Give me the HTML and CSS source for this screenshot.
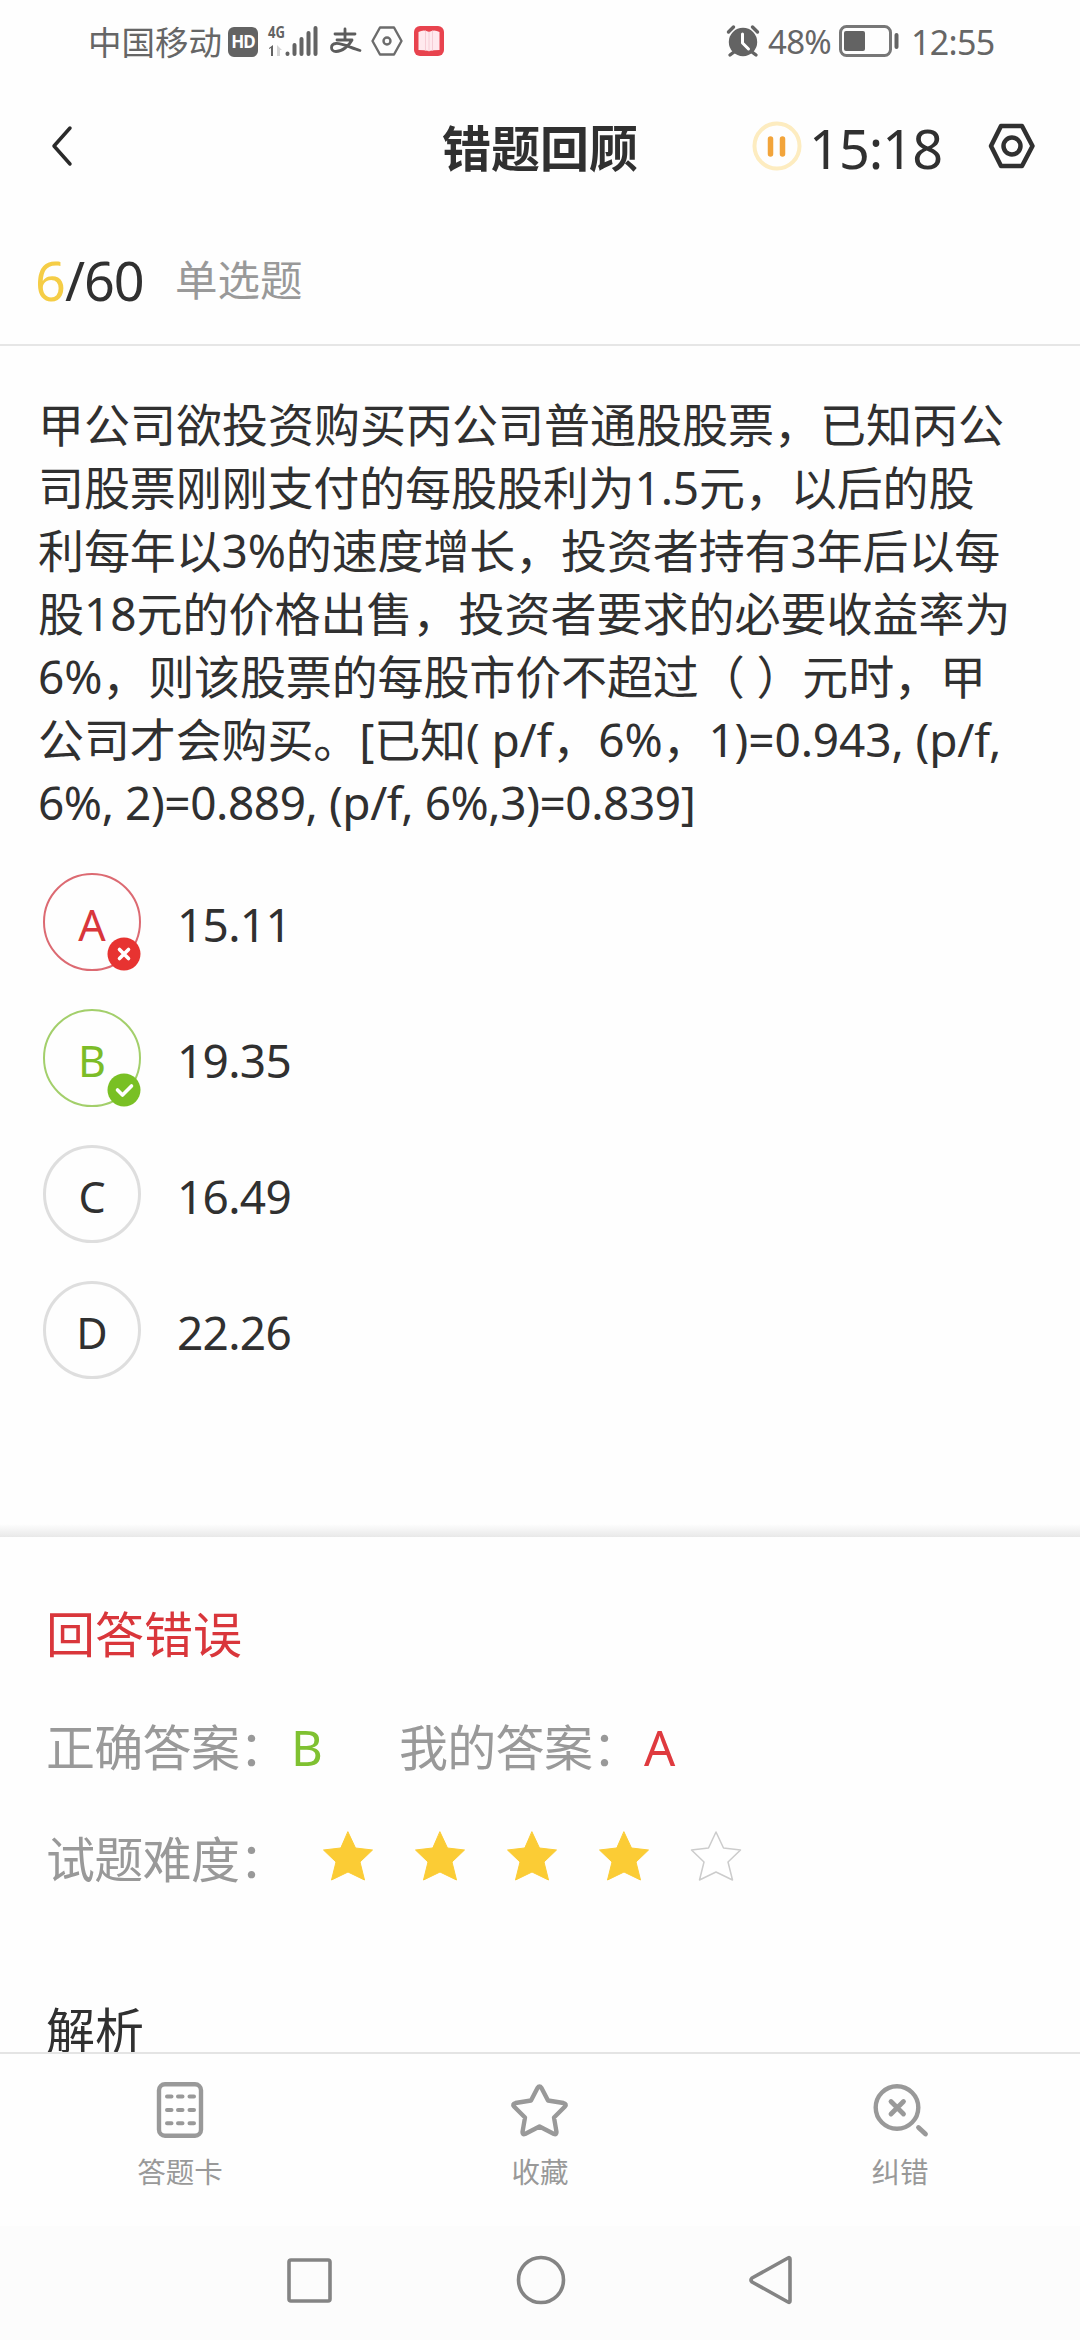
FILE: index.html
```html
<!DOCTYPE html>
<html lang="zh-CN">
<head>
<meta charset="utf-8">
<title>错题回顾</title>
<link rel="stylesheet" href="styles.css">
</head>
<body>
<div class="status">
  <span class="carrier">中国移动</span>
  <span class="hd">HD</span>
  <svg class="signal" width="52" height="34" viewBox="0 0 52 34">
    <text class="net" x="0" y="14" textLength="17" lengthAdjust="spacingAndGlyphs">4G</text>
    <path class="solid" d="M1 24l4-3v11H3v-8l-2 1z"/>
    <path class="faint" d="M9 21l5 5h-2v6H9z"/>
    <path class="bars" d="M19.500 29.500v.5M26.500 21v9M33.500 15v15M40.500 9v21M47.500 4v26"/>
  </svg>
  <svg class="pay" width="32" height="26" viewBox="0 0 32 26">
    <path class="pay-stroke" d="M5 5h20M15 0v11M7 11h15C19 17 12 22.500 6 22.500c-6 0-6-7.500 0-8 6-.5 15 4.500 24 7"/>
  </svg>
  <svg class="eye" width="32" height="30" viewBox="0 0 32 30">
    <path class="thin" d="M9 1.500h14L30.500 15 23 28.500H9L1.500 15z"/><circle class="thin" cx="16" cy="15" r="3.500"/>
  </svg>
  <svg class="book" width="30" height="30" viewBox="0 0 30 30">
    <rect class="book-bg" width="30" height="30" rx="6"/><path class="page" d="M4.500 6Q10 3 15 6q5-3 10.500 0v18Q20 24 15 25q-5-1-10.500-1z"/><path class="fold" d="M15 6v19M11.500 5v19M18.500 5v19"/>
  </svg>
  <svg class="alarm" width="32" height="32" viewBox="0 0 32 32">
    <circle class="solid" cx="16" cy="17" r="14.200"/>
    <path class="leg" d="M1.500 7l5-5M30.500 7l-5-5M7 27l-4 3M25 27l4 3"/>
    <path class="hand" d="M15.500 9v9l6 6"/>
  </svg>
  <span class="pct">48%</span>
  <svg class="battery" width="60" height="32" viewBox="0 0 60 32">
    <rect class="shell" x="1.500" y="1.500" width="50" height="29" rx="6"/><rect class="solid" x="5" y="6" width="21" height="20" rx="2"/><rect class="solid" x="55.500" y="8" width="4" height="16" rx="2"/>
  </svg>
  <span class="clock">12:55</span>
</div>

<header class="header">
  <svg class="back" width="22" height="40" viewBox="0 0 22 40"><path d="M19 2L3 20l16 18"/></svg>
  <h1 class="title">错题回顾</h1>
  <svg class="pause" width="50" height="50" viewBox="0 0 50 50"><circle cx="25" cy="25" r="22.500"/><path d="M18.500 18v15M30.500 18v15"/></svg>
  <span class="timer">15:18</span>
  <svg class="gear" width="48" height="46" viewBox="0 0 48 46"><path d="M13 3h21l10.500 20L34 43H13L3 23z"/><circle cx="24" cy="23" r="8.500"/></svg>
</header>

<div class="progress">
  <span class="count"><b class="current">6</b>/60</span>
  <span class="kind">单选题</span>
</div>

<main class="question">
  <p class="stem">
    <span class="line">甲公司欲投资购买丙公司普通股股票，已知丙公</span>
    <span class="line snug">司股票刚刚支付的每股股利为1.5元，以后的股</span>
    <span class="line snug">利每年以3%的速度增长，投资者持有3年后以每</span>
    <span class="line">股18元的价格出售，投资者要求的必要收益率为</span>
    <span class="line snug">6%，则该股票的每股市价不超过（ ）元时，甲</span>
    <span class="line snug">公司才会购买。[已知( p/f，6%，1)=0.943, (p/f,</span>
    <span class="line tight">6%, 2)=0.889, (p/f, 6%,3)=0.839]</span>
  </p>
  <ul class="options">
    <li class="option wrong"><span class="mark">A<svg class="badge" width="34" height="34" viewBox="0 0 34 34"><circle cx="17" cy="17" r="16.500"/><path d="M12.500 12.500l9 9M21.500 12.500l-9 9"/></svg></span><span class="value">15.11</span></li>
    <li class="option right"><span class="mark">B<svg class="badge" width="34" height="34" viewBox="0 0 34 34"><circle cx="17" cy="17" r="16.500"/><path d="M10.500 17l5 5 9-9"/></svg></span><span class="value">19.35</span></li>
    <li class="option"><span class="mark">C</span><span class="value">16.49</span></li>
    <li class="option"><span class="mark">D</span><span class="value">22.26</span></li>
  </ul>
</main>

<section class="result">
  <div class="verdict">回答错误</div>
  <div class="row">
    <span class="label">正确答案：</span><span class="ok">B</span>
    <span class="label">我的答案：</span><span class="bad">A</span>
  </div>
  <div class="row">
    <span class="label">试题难度：</span>
    <span class="stars">
      <svg class="star" viewBox="0 0 52 50"><path d="M26 1l7.500 16L50.500 19 38 31l4.500 18L26 41 9.500 49 14 31 1.500 19l17-2z"/></svg>
      <svg class="star" viewBox="0 0 52 50"><path d="M26 1l7.500 16L50.500 19 38 31l4.500 18L26 41 9.500 49 14 31 1.500 19l17-2z"/></svg>
      <svg class="star" viewBox="0 0 52 50"><path d="M26 1l7.500 16L50.500 19 38 31l4.500 18L26 41 9.500 49 14 31 1.500 19l17-2z"/></svg>
      <svg class="star" viewBox="0 0 52 50"><path d="M26 1l7.500 16L50.500 19 38 31l4.500 18L26 41 9.500 49 14 31 1.500 19l17-2z"/></svg>
      <svg class="star empty" viewBox="0 0 52 50"><path d="M26 1l7.500 16L50.500 19 38 31l4.500 18L26 41 9.500 49 14 31 1.500 19l17-2z"/></svg>
    </span>
  </div>
  <div class="analysis">解析</div>
</section>

<nav class="toolbar">
  <div class="tool">
    <svg width="60" height="60" viewBox="0 0 60 60"><rect x="9" y="4.300" width="42" height="51.500" rx="6"/><path class="dots" d="M17 16.500h4.500M28 16.500h4.500M39.500 16.500H44M17 30h4.500M28 30h4.500M39.500 30H44M17 43.300h4.500M28 43.300h4.500M39.500 43.300H44"/></svg>
    <span>答题卡</span>
  </div>
  <div class="tool">
    <svg width="60" height="60" viewBox="0 0 60 60"><path d="M27.500 8q2-3 4 0L38 20.500l15.500 2.500q3.500 1 1.500 3.500L44 37.500 46.500 52q0 3-2.500 2L29.500 46.500 15 54q-2.500 1-2.500-2L15 37.500 4 26.500Q2 24 5.500 23L21 20.500z"/></svg>
    <span>收藏</span>
  </div>
  <div class="tool">
    <svg width="60" height="60" viewBox="0 0 60 60"><circle cx="27" cy="27.500" r="21.300"/><path class="bold" d="M21 21.500l12.500 12.500M33.500 21.500L21 34M48.500 47.500l7 6.500"/></svg>
    <span>纠错</span>
  </div>
</nav>

<footer class="sysnav">
  <svg width="50" height="50" viewBox="0 0 50 50"><rect x="4" y="5" width="41" height="41" rx="2"/></svg>
  <svg width="50" height="50" viewBox="0 0 50 50"><circle cx="25" cy="25" r="22.500"/></svg>
  <svg width="50" height="50" viewBox="0 0 50 50"><path d="M43 4v42q0 2-2 1L5 27q-2-2 0-4L41 3q2-1 2 1z"/></svg>
</footer>
</body>
</html>
```
FILE: styles.css
```css
* { box-sizing: border-box; }
body {
  margin: 0;
  width: 1080px;
  height: 2340px;
  overflow: hidden;
  display: flex;
  flex-direction: column;
  background: #fefefe;
  color: #303030;
  font-family: "Noto Sans", "Noto Sans CJK SC", sans-serif;
  text-spacing-trim: space-all;
}
svg { display: block; flex: none; fill: none; overflow: visible; stroke-linecap: round; stroke-linejoin: round; }
span { white-space: nowrap; }

.status { height: 84px; display: flex; align-items: center; padding-left: 88px; color: #666; line-height: 40px; flex: none; }
.status .solid { fill: #636363; }
.carrier { width: 140px; font-size: 33.500px; }
.hd { width: 30px; height: 30px; margin-top: -1px; border-radius: 6px; background: #636363; color: #fff; font-size: 17px; font-weight: 700; line-height: 30px; text-align: center; letter-spacing: -1px; }
.signal { margin: -2px 0 0 10px; }
.net { fill: #636363; font: 700 16px "Noto Sans", sans-serif; }
.faint { fill: #d5d5d5; }
.bars { stroke: #636363; stroke-width: 4px; }
.pay { margin: 0 0 0 10px; }
.pay-stroke { stroke: #5c5c5c; stroke-width: 2.8px; }
.eye { margin-left: 9px; margin-top: -2px; }
.thin { stroke: #6c6c6c; stroke-width: 2.4px; }
.book { margin-left: 11px; margin-top: -2px; }
.book-bg { fill: #e8434e; }
.page { fill: #ffe9ee; }
.fold { stroke: #f6cdd6; stroke-width: 1px; }
.alarm { margin-left: 283px; margin-top: -3px; }
.leg { stroke: #636363; stroke-width: 3.400px; }
.hand { stroke: #fff; stroke-width: 3px; }
.pct { width: 71px; margin-left: 9px; font-size: 33px; letter-spacing: -.700px; }
.battery { margin-top: -3px; }
.shell { stroke: #777; stroke-width: 3px; }
.clock { margin-left: 12px; font-size: 34px; letter-spacing: -.700px; }

.header { height: 128px; display: flex; align-items: center; padding-left: 51px; flex: none; }
.back { margin-top: -5px; }
.back path { stroke: #2a2a2a; stroke-width: 3.500px; }
.title { margin: 0 0 0 369px; width: 196px; font-size: 49px; line-height: 60px; font-weight: 700; }
.pause { margin-left: 114px; margin-top: -4px; }
.pause circle { stroke: #fdecc0; stroke-width: 4px; }
.pause path { stroke: #f2a43a; stroke-width: 5.500px; }
.timer { width: 178px; margin-left: 7px; font-size: 54px; line-height: 60px; letter-spacing: -1px; }
.gear { stroke: #303030; stroke-width: 4.500px; margin: -5px 0 0 1px; }

.progress { height: 134px; display: flex; align-items: center; padding: 3px 0 0 35px; border-bottom: 2px solid #e6e6e6; flex: none; }
.count { width: 140px; font-size: 54px; line-height: 60px; letter-spacing: -1px; }
.current { font-weight: 400; color: #f5cd46; }
.kind { font-size: 42.500px; line-height: 60px; color: #999; }

.question { height: 1191px; padding: 47px 0 0 38px; flex: none; background: linear-gradient(#fefefe, #fefefe 1178px, #e8e8e8); }
.stem { margin: 0; font-size: 46px; line-height: 63px; }
.line { display: block; height: 63px; }
.snug { letter-spacing: -.120px; }
.tight { letter-spacing: -.440px; }
.options { list-style: none; margin: 39px 0 0; padding: 0 0 0 5px; display: grid; gap: 38px; }
.option { display: flex; align-items: center; height: 98px; }
.mark { position: relative; width: 98px; height: 98px; border: 3px solid #dedede; border-radius: 50%; font-size: 43px; line-height: 97px; text-align: center; }
.value { margin-left: 36px; font-size: 46px; line-height: 60px; padding-top: 4px; letter-spacing: -.700px; }
.badge { position: absolute; right: -2px; bottom: -2px; }
.badge path { stroke: #fff; stroke-width: 3.600px; }
.wrong .mark { border: 2px solid #dc6a72; color: #d9363b; line-height: 99px; }
.wrong circle { fill: #e73331; }
.right .mark { border: 2px solid #a3cf6b; color: #7cbc28; line-height: 99px; }
.right circle { fill: #79c024; }

.result { height: 515px; padding: 67px 0 0 46px; overflow: hidden; font-size: 49px; line-height: 60px; flex: none; }
.verdict { color: #d9363b; }
.row { display: flex; margin-top: 53px; height: 60px; color: #999; }
.row + .row { margin-top: 52px; }
.label { width: 245px; letter-spacing: -.700px; }
.ok { width: 108px; color: #7fc131; }
.bad { color: #df3a3f; }
.stars { display: flex; gap: 40px; padding: 2px 0 0 31px; }
.star { width: 52px; height: 50px; }
.star path { fill: #fbcc35; stroke: #fbcc35; stroke-width: 1px; }
.star.empty path { fill: #fff; stroke: #ccc; stroke-width: 1.500px; }
.analysis { margin-top: 111px; }

.toolbar { height: 174px; display: grid; grid-template-columns: repeat(3, 1fr); border-top: 2px solid #e4e4e4; padding-top: 26px; flex: none; }
.tool { display: flex; flex-direction: column; align-items: center; font-size: 28.500px; line-height: 40px; color: #999; gap: 12px; }
.tool svg { stroke: #999; stroke-width: 4.400px; }
.tool .dots { stroke-width: 4px; }
.tool .bold { stroke-width: 4.800px; }
.sysnav { flex: 1; display: flex; justify-content: center; gap: 181px; padding: 29px 0 0 1px; background: #fcfcfc; }
.sysnav svg { stroke: #848484; stroke-width: 3.600px; }
```
